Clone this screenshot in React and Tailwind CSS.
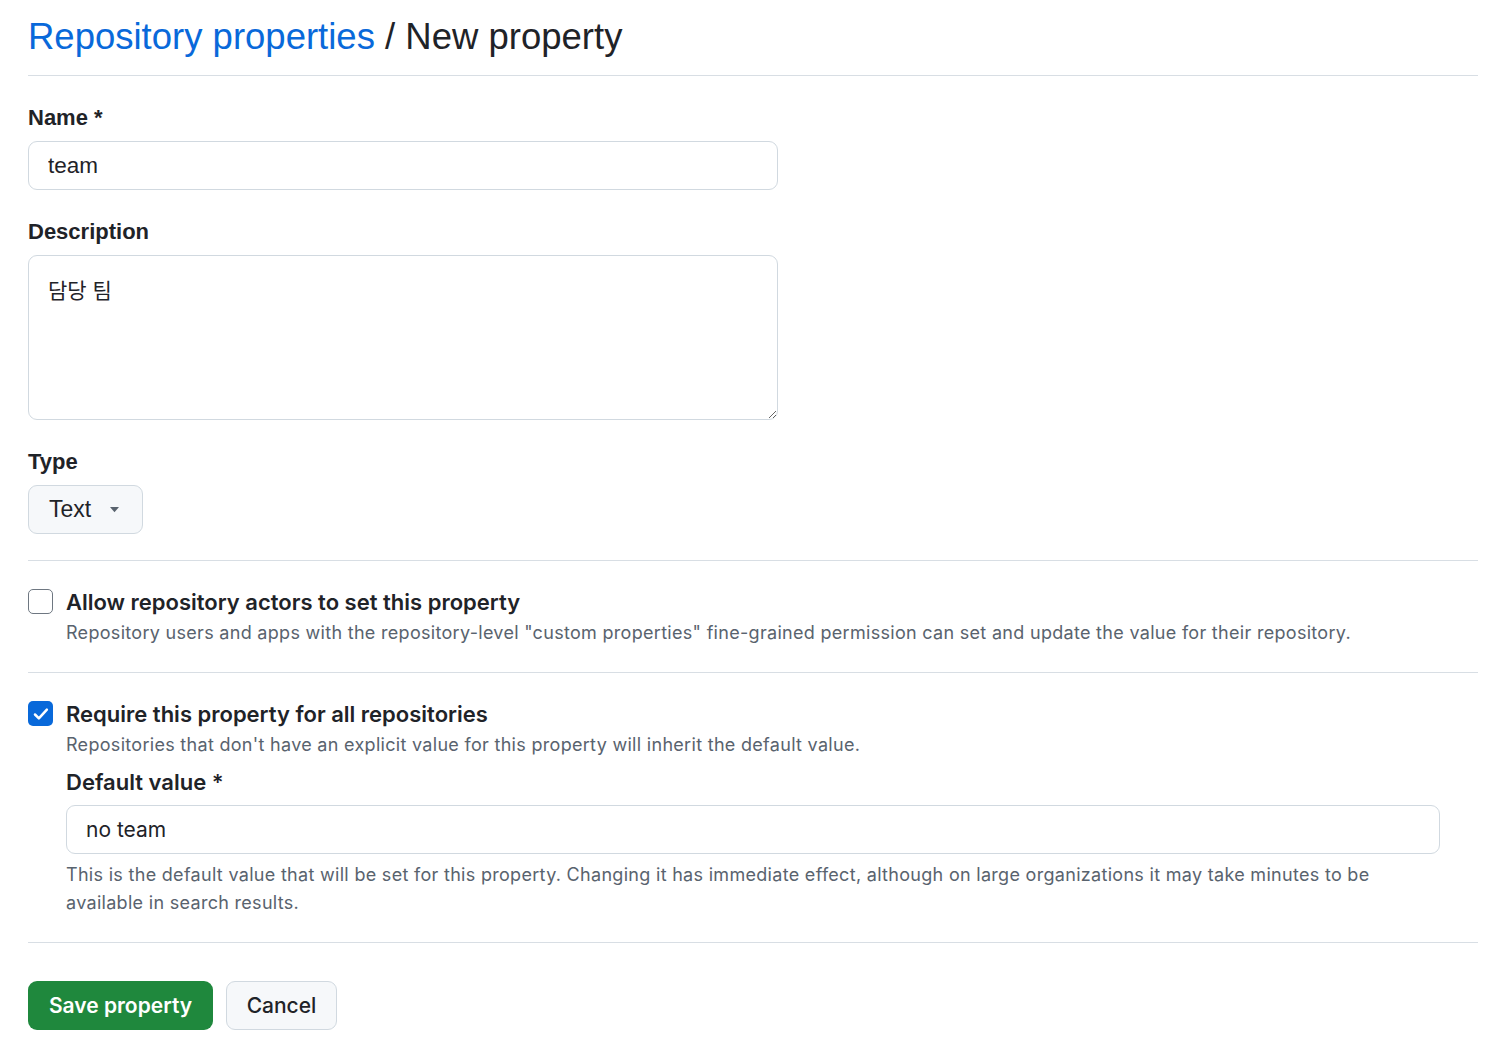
import React from "react";

const sans = { fontFamily: "'Liberation Sans', Arial, sans-serif" };
const ui = { fontFamily: "Inter, 'Noto Sans', sans-serif" };

const Checkbox = ({ checked }) =>
  checked ? (
    <span className="flex h-[25px] w-[25px] shrink-0 items-center justify-center rounded-[5px] bg-[#0969da]">
      <svg viewBox="0 0 16 16" className="h-[20px] w-[20px]" fill="none">
        <path d="M3.2 8.4l3.1 3.1 6.4-7" stroke="white" strokeWidth="2" strokeLinecap="round" strokeLinejoin="round" />
      </svg>
    </span>
  ) : (
    <span className="block h-[25px] w-[25px] shrink-0 rounded-[5px] border-[1.5px] border-[#6e7781] bg-white" />
  );

const OptionRow = ({ checked, title, hint, children }) => (
  <div className="flex gap-[13px] pt-[26px]" style={ui}>
    <div className="pt-[2px]">
      <Checkbox checked={checked} />
    </div>
    <div className="flex-1">
      <div className="text-[22px] font-semibold leading-[30px] text-[#1f2328]">{title}</div>
      <div className="mt-[2px] text-[18px] leading-[28px] tracking-[0.3px] text-[#59636e]">{hint}</div>
      {children}
    </div>
  </div>
);

export default function App() {
  return (
    <div className="min-h-screen bg-white px-[28px] text-[#1f2328]" style={sans}>
      <div className="w-[1450px]">
        <header className="border-b border-[#d8dee4] pb-[16px] pt-[14px]">
          <h1 className="text-[36.5px] font-normal leading-[45px]">
            <a href="#" className="text-[#0969da]">Repository properties</a>
            <span> / New property</span>
          </h1>
        </header>

        <div className="w-[750px]">
          <label className="mt-[27px] block text-[22px] font-bold leading-[30px]">Name *</label>
          <input
            defaultValue="team"
            className="mt-[8px] block h-[49px] w-full rounded-[9px] border border-[#d1d9e0] px-[19px] text-[22.5px] outline-none"
            style={sans}
          />

          <label className="mt-[27px] block text-[22px] font-bold leading-[30px]">Description</label>
          <textarea
            defaultValue="담당 팀"
            className="mt-[8px] block h-[165px] w-full rounded-[9px] border border-[#d1d9e0] px-[19px] pb-[18px] pt-[20px] text-[21px] leading-[30px] outline-none"
            style={{ fontFamily: "'Liberation Sans', 'Noto Sans CJK KR', sans-serif" }}
          />

          <label className="mt-[27px] block text-[22px] font-bold leading-[30px]">Type</label>
          <button className="mt-[8px] flex h-[49px] w-[115px] items-center gap-[18px] rounded-[9px] border border-[#d1d9e0] bg-[#f6f8fa] pl-[20px] text-[23px]">
            <span>Text</span>
            <svg viewBox="0 0 12 8" className="h-[6px] w-[11px]">
              <path d="M0 0h12L6 7z" fill="#59636e" />
            </svg>
          </button>
        </div>

        <div className="mt-[26px] border-b border-[#d8dee4]" />

        <div className="border-b border-[#d8dee4] pb-[25px]">
          <OptionRow
            checked={false}
            title="Allow repository actors to set this property"
            hint={'Repository users and apps with the repository-level "custom properties" fine-grained permission can set and update the value for their repository.'}
          />
        </div>

        <div className="border-b border-[#d8dee4] pb-[25px]">
          <OptionRow
            checked
            title="Require this property for all repositories"
            hint="Repositories that don't have an explicit value for this property will inherit the default value."
          >
            <div className="w-[1374px]">
              <label className="mt-[8px] block text-[22px] font-semibold leading-[30px]">Default value *</label>
              <input
                defaultValue="no team"
                className="mt-[8px] block h-[49px] w-full rounded-[9px] border border-[#d1d9e0] px-[19px] text-[21px] outline-none"
                style={ui}
              />
              <p className="mt-[7px] text-[18px] leading-[28px] tracking-[0.3px] text-[#59636e]">
                This is the default value that will be set for this property. Changing it has immediate effect, although on large organizations it may take minutes to be available in search results.
              </p>
            </div>
          </OptionRow>
        </div>

        <div className="flex gap-[13px] pt-[38px]" style={ui}>
          <button className="h-[49px] w-[185px] rounded-[9px] bg-[#1f883d] text-[21px] font-semibold text-white">
            Save property
          </button>
          <button className="h-[49px] w-[111px] rounded-[9px] border border-[#d1d9e0] bg-[#f6f8fa] text-[21px] font-medium text-[#1f2328]">
            Cancel
          </button>
        </div>
      </div>
    </div>
  );
}
